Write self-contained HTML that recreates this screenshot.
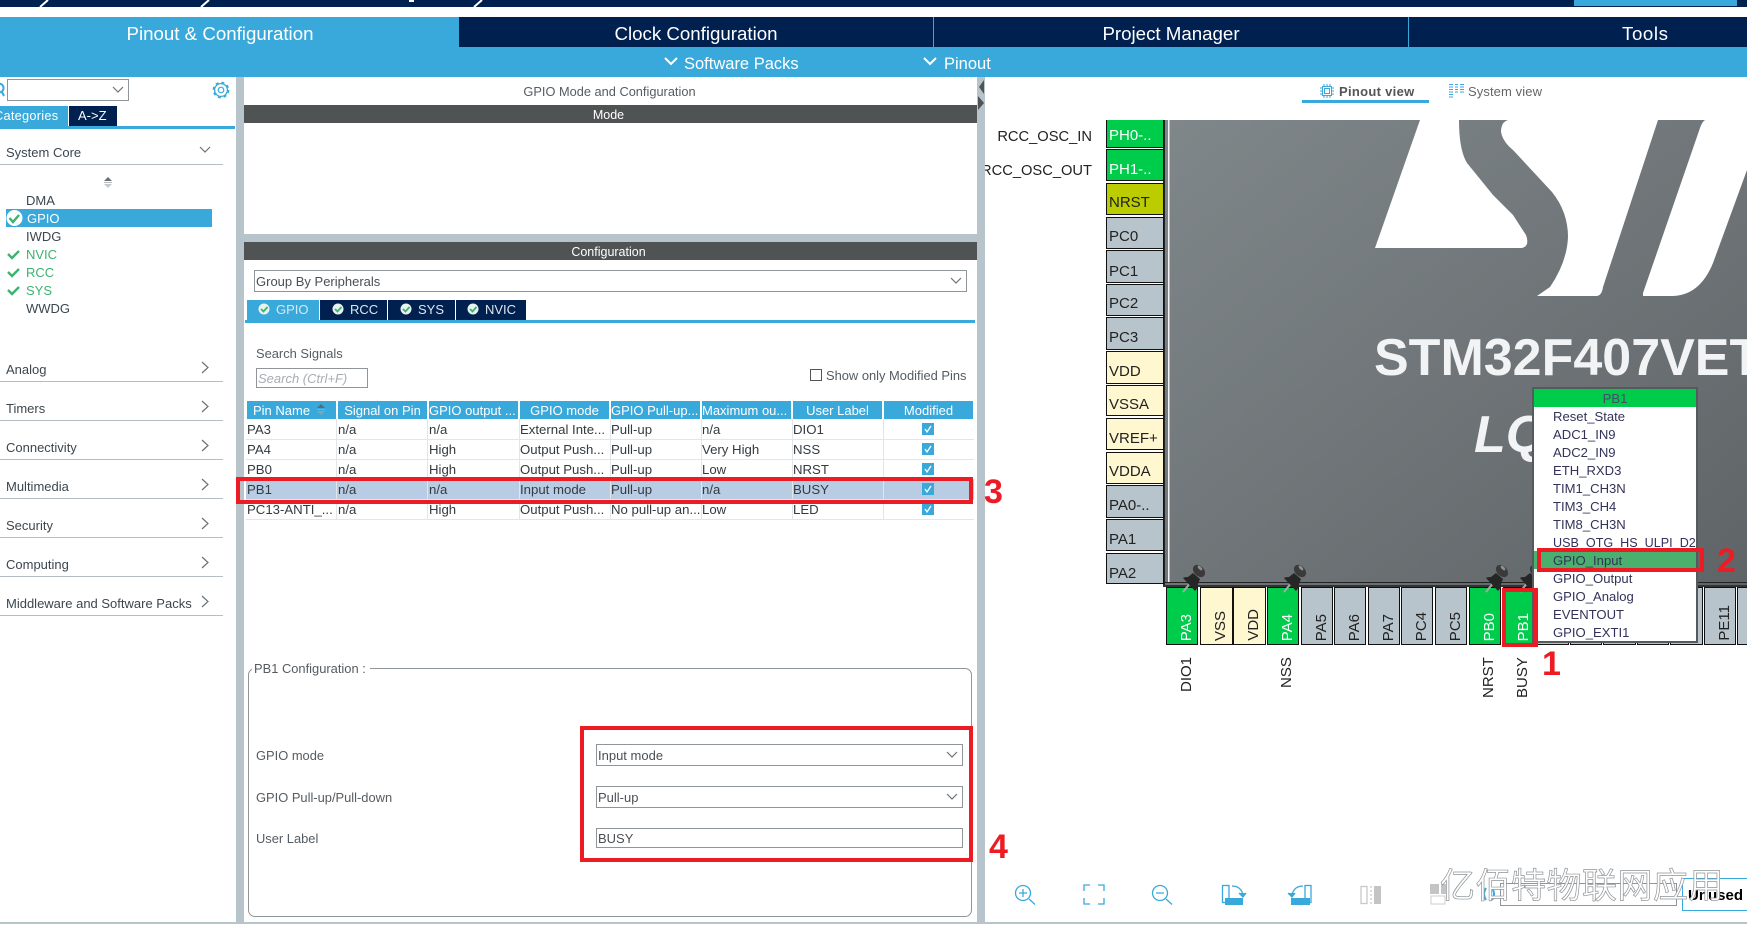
<!DOCTYPE html>
<html><head><meta charset="utf-8"><title>STM32CubeMX</title>
<style>
html,body{margin:0;padding:0;background:#fff}
#p{position:relative;width:1747px;height:929px;overflow:hidden;background:#fff;font-family:"Liberation Sans","Noto Sans CJK SC",sans-serif;font-size:13px;color:#3c464e}
#p div,#p svg{position:absolute}
.t{white-space:nowrap;line-height:18px;height:18px}
.r{background:#39A9DC}.n{background:#002050}
.tab{top:17px;height:30px;line-height:33px;text-align:center;color:#fff;font-size:18.7px;white-space:nowrap}
.hd{background:#39A9DC;top:401px;height:18px;line-height:19px;color:#fff;text-align:center;font-size:13px;white-space:nowrap;overflow:hidden}
.sl{left:0;width:223px;height:1px;background:#b3bec5}
.cell{white-space:nowrap;line-height:20px;height:18px;color:#333a40;font-size:13.2px}
.gl{background:#e2e6e8}
.sel{border:1px solid #8f9599;background:#fff;box-sizing:border-box;line-height:21px;padding-left:1px;color:#4a5056;white-space:nowrap;font-size:13px}
.lab{color:#555c62;font-size:12.9px;line-height:20px}
.redb{border:4px solid #ED1C24;box-sizing:border-box}
.num{color:#ED1C24;font-weight:bold;white-space:nowrap;line-height:30px;height:30px;font-size:34px}
.lp{left:1106px;width:58px;border:1px solid #111;box-sizing:border-box;overflow:hidden}
.lp span{position:absolute;left:2px;font-size:15px;line-height:18px;white-space:nowrap}
.bp{top:587px;height:58px;border:1px solid #111;box-sizing:border-box;overflow:hidden}
.bp span{position:absolute;left:9px;bottom:3px;width:22px;line-height:22px;font-size:15px;writing-mode:vertical-rl;transform:rotate(180deg);white-space:nowrap}
.g{background:#00CC4B;color:#fff}.c{background:#FFF7CF;color:#222}.y{background:#BBCC00;color:#222}.s{background:#B8C4CC;color:#222}
.rl{top:658px;width:20px;line-height:20px;font-size:15px;color:#222;writing-mode:vertical-rl;transform:rotate(180deg);white-space:nowrap;text-align:right;height:40px}
.mi{left:1553px;font-size:13.1px;color:#33335a;white-space:nowrap;line-height:20px;height:18px}
.s13{font-size:13px;line-height:20px}
</style></head><body>
<div id="p">
<!-- top bar -->
<div class="n" style="left:0;top:0;width:1747px;height:7px"></div>
<svg style="left:0;top:0" width="1747" height="8"><g stroke="#fff" stroke-width="2"><line x1="48" y1="0" x2="40" y2="7"/><line x1="209" y1="0" x2="201" y2="7"/><line x1="482" y1="0" x2="474" y2="7"/></g><rect x="409" y="0" width="5" height="2" fill="#fff"/></svg>
<div class="r" style="left:1574px;top:0;width:163px;height:6px"></div>

<div class="r" style="left:0;top:17px;width:1747px;height:60px"></div>
<div class="tab" style="left:0;width:440px">Pinout &amp; Configuration</div>
<div class="n tab" style="left:459px;width:474px">Clock Configuration</div>
<div class="n tab" style="left:934px;width:474px">Project Manager</div>
<div class="n tab" style="left:1409px;width:338px;text-align:left;text-indent:213px;letter-spacing:.6px">Tools</div>
<div class="t" style="left:684px;top:54px;color:#fff;font-size:16.5px;height:20px;line-height:20px">Software Packs</div>
<div class="t" style="left:944px;top:54px;color:#fff;font-size:16.5px;height:20px;line-height:20px">Pinout</div>
<svg style="left:660px;top:55px" width="290" height="14"><path d="M5 3l6 6 6-6M264 3l6 6 6-6" fill="none" stroke="#fff" stroke-width="2"/></svg>

<!-- sidebar -->
<div style="left:236px;top:77px;width:8px;height:847px;background:#B8C4CB"></div>
<svg style="left:0;top:82px" width="5" height="16"><circle cx="-1" cy="6" r="4.5" fill="none" stroke="#39A9DC" stroke-width="2"/><line x1="2" y1="10" x2="4" y2="14" stroke="#39A9DC" stroke-width="2"/></svg>
<div class="sel" style="left:7px;top:79px;width:122px;height:22px"></div>
<svg style="left:112px;top:85px" width="12" height="10"><path d="M1 2l5 5 5-5" fill="none" stroke="#6a7378" stroke-width="1.2"/></svg>
<svg style="left:212px;top:81px" width="18" height="18" viewBox="0 0 18 18"><circle cx="9" cy="9" r="6.4" fill="none" stroke="#39A9DC" stroke-width="1.3"/><circle cx="9" cy="9" r="7.6" fill="none" stroke="#39A9DC" stroke-width="1.6" stroke-dasharray="3 3"/><circle cx="9" cy="9" r="2.8" fill="none" stroke="#39A9DC" stroke-width="1.2"/></svg>
<div class="r" style="left:0;top:106px;width:68px;height:20px"></div>
<div class="n" style="left:69px;top:106px;width:48px;height:20px"></div>
<div class="t" style="left:-6px;top:107px;color:#fff;font-size:12.8px;letter-spacing:.25px">Categories</div>
<div class="t" style="left:78px;top:107px;color:#fff;font-size:13px">A-&gt;Z</div>
<div class="r" style="left:0;top:126px;width:235px;height:3px"></div>

<div class="t s13" style="left:6px;top:143px">System Core</div>
<div class="sl" style="top:164px"></div>
<svg style="left:199px;top:145px" width="12" height="10"><path d="M1 2l5 5 5-5" fill="none" stroke="#6a7378" stroke-width="1.2"/></svg>
<svg style="left:104px;top:176px" width="8" height="12"><path d="M0 5l4-4 4 4z" fill="#66707a"/><rect x="0" y="6" width="8" height="1" fill="#bbb"/><path d="M0 8l4 4 4-4z" fill="#c5cacd"/></svg>
<div class="r" style="left:6px;top:209px;width:206px;height:18px"></div>
<div class="t s13" style="left:26px;top:191px">DMA</div>
<div class="t s13" style="left:27px;top:209px;color:#fff">GPIO</div>
<div class="t s13" style="left:26px;top:227px">IWDG</div>
<div class="t s13" style="left:26px;top:245px;color:#3cb371">NVIC</div>
<div class="t s13" style="left:26px;top:263px;color:#3cb371">RCC</div>
<div class="t s13" style="left:26px;top:281px;color:#3cb371">SYS</div>
<div class="t s13" style="left:26px;top:299px">WWDG</div>
<svg style="left:6px;top:209px" width="18" height="18"><circle cx="8.5" cy="9" r="8" fill="#fff"/><path d="M3.5 9l3.5 4 6-7" fill="none" stroke="#3cb371" stroke-width="2.4"/></svg>
<svg style="left:6px;top:245px" width="16" height="60"><path d="M2 9l4 4 7-7M2 27l4 4 7-7M2 45l4 4 7-7" fill="none" stroke="#3cb371" stroke-width="2.4"/></svg>

<div class="t s13" style="left:6px;top:360px">Analog</div><div class="sl" style="top:381px"></div>
<div class="t s13" style="left:6px;top:399px">Timers</div><div class="sl" style="top:420px"></div>
<div class="t s13" style="left:6px;top:438px">Connectivity</div><div class="sl" style="top:459px"></div>
<div class="t s13" style="left:6px;top:477px">Multimedia</div><div class="sl" style="top:498px"></div>
<div class="t s13" style="left:6px;top:516px">Security</div><div class="sl" style="top:537px"></div>
<div class="t s13" style="left:6px;top:555px">Computing</div><div class="sl" style="top:576px"></div>
<div class="t s13" style="left:6px;top:594px">Middleware and Software Packs</div><div class="sl" style="top:615px"></div>
<svg style="left:200px;top:359px" width="12" height="250"><path d="M2 3l6 5.500-6 5.500M2 42l6 5.500-6 5.500M2 81l6 5.500-6 5.500M2 120l6 5.500-6 5.500M2 159l6 5.500-6 5.500M2 198l6 5.500-6 5.500M2 237l6 5.500-6 5.500" fill="none" stroke="#6a7378" stroke-width="1.2"/></svg>

<!-- middle panel -->
<div class="t" style="left:244px;top:83px;width:731px;text-align:center;color:#555c62;font-size:12.8px">GPIO Mode and Configuration</div>
<div style="left:244px;top:105px;width:729px;height:18px;background:#4F5353;color:#fff;text-align:center;line-height:20px;font-size:12.5px">Mode</div>
<div style="left:973px;top:105px;width:4px;height:18px;background:#4F5353"></div>
<div style="left:244px;top:234px;width:733px;height:8px;background:#B8C4CB"></div>
<div style="left:244px;top:242px;width:729px;height:18px;background:#4F5353;color:#fff;text-align:center;line-height:20px;font-size:12.5px">Configuration</div>
<div style="left:973px;top:242px;width:4px;height:18px;background:#4F5353"></div>
<div style="left:977px;top:77px;width:8px;height:847px;background:#B8C4CB"></div>
<svg style="left:977px;top:77px" width="8" height="36"><path d="M7 3L2 10l5 7zM1 19l6 7-6 7z" fill="#4F5353"/></svg>
<div class="sel" style="left:254px;top:270px;width:713px;height:22px">Group By Peripherals</div>
<svg style="left:950px;top:276px" width="12" height="10"><path d="M1 2l5 5 5-5" fill="none" stroke="#6a7378" stroke-width="1.2"/></svg>

<div class="r" style="left:247px;top:300px;width:72px;height:20px"></div>
<div class="n" style="left:320px;top:300px;width:67px;height:20px"></div>
<div class="n" style="left:388px;top:300px;width:67px;height:20px"></div>
<div class="n" style="left:456px;top:300px;width:70px;height:20px"></div>
<div class="r" style="left:245px;top:320px;width:730px;height:3px"></div>
<svg style="left:247px;top:300px" width="280" height="20"><g fill="#e8f2ee"><circle cx="17" cy="9" r="5.500"/><circle cx="91" cy="9" r="5.500"/><circle cx="159" cy="9" r="5.500"/><circle cx="226" cy="9" r="5.500"/></g><path d="M14 9l2.500 2.500 4-4.500M88 9l2.500 2.500 4-4.500M156 9l2.500 2.500 4-4.500M223 9l2.500 2.500 4-4.500" fill="none" stroke="#3cb371" stroke-width="1.800"/></svg>
<div class="t" style="left:276px;top:301px;color:#d5e9f3;font-size:13px">GPIO</div>
<div class="t" style="left:350px;top:301px;color:#dfe6ec;font-size:13px">RCC</div>
<div class="t" style="left:418px;top:301px;color:#dfe6ec;font-size:13px">SYS</div>
<div class="t" style="left:485px;top:301px;color:#dfe6ec;font-size:13px">NVIC</div>

<div class="t lab" style="left:256px;top:344px">Search Signals</div>
<div class="sel" style="left:256px;top:368px;width:112px;height:20px;line-height:19px;font-style:italic;color:#a8adb0">Search (Ctrl+F)</div>
<div style="left:810px;top:369px;width:12px;height:12px;border:1px solid #555;box-sizing:border-box"></div>
<div class="t lab" style="left:826px;top:366px">Show only Modified Pins</div>

<!-- table -->
<div class="hd" style="left:247px;width:89px;text-align:left;text-indent:6px">Pin Name</div>
<svg style="left:317px;top:403px" width="8" height="13"><path d="M0 5l4-4 4 4z" fill="#5a6a75"/><rect y="6" width="8" height="1" fill="#8aa"/><path d="M0 8l4 4 4-4z" fill="#7fa5bb"/></svg>
<div class="hd" style="left:338px;width:89px">Signal on Pin</div>
<div class="hd" style="left:429px;width:89px;text-align:left">GPIO output ...</div>
<div class="hd" style="left:520px;width:89px">GPIO mode</div>
<div class="hd" style="left:611px;width:89px;text-align:left">GPIO Pull-up...</div>
<div class="hd" style="left:702px;width:89px;text-align:left">Maximum ou...</div>
<div class="hd" style="left:793px;width:89px">User Label</div>
<div class="hd" style="left:884px;width:89px">Modified</div>

<div style="left:246px;top:480px;width:728px;height:19px;background:#B8CDE3"></div>
<div class="gl" style="left:246px;top:439px;width:728px;height:1px"></div>
<div class="gl" style="left:246px;top:459px;width:728px;height:1px"></div>
<div class="gl" style="left:246px;top:479px;width:728px;height:1px"></div>
<div class="gl" style="left:246px;top:499px;width:728px;height:1px"></div>
<div class="gl" style="left:246px;top:519px;width:728px;height:1px"></div>
<div class="gl" style="left:336px;top:419px;width:1px;height:100px"></div>
<div class="gl" style="left:427px;top:419px;width:1px;height:100px"></div>
<div class="gl" style="left:519px;top:419px;width:1px;height:100px"></div>
<div class="gl" style="left:610px;top:419px;width:1px;height:100px"></div>
<div class="gl" style="left:701px;top:419px;width:1px;height:100px"></div>
<div class="gl" style="left:792px;top:419px;width:1px;height:100px"></div>
<div class="gl" style="left:883px;top:419px;width:1px;height:100px"></div>

<div class="cell" style="left:247px;top:420px">PA3</div><div class="cell" style="left:338px;top:420px">n/a</div><div class="cell" style="left:429px;top:420px">n/a</div><div class="cell" style="left:520px;top:420px">External Inte...</div><div class="cell" style="left:611px;top:420px">Pull-up</div><div class="cell" style="left:702px;top:420px">n/a</div><div class="cell" style="left:793px;top:420px">DIO1</div>
<div class="cell" style="left:247px;top:440px">PA4</div><div class="cell" style="left:338px;top:440px">n/a</div><div class="cell" style="left:429px;top:440px">High</div><div class="cell" style="left:520px;top:440px">Output Push...</div><div class="cell" style="left:611px;top:440px">Pull-up</div><div class="cell" style="left:702px;top:440px">Very High</div><div class="cell" style="left:793px;top:440px">NSS</div>
<div class="cell" style="left:247px;top:460px">PB0</div><div class="cell" style="left:338px;top:460px">n/a</div><div class="cell" style="left:429px;top:460px">High</div><div class="cell" style="left:520px;top:460px">Output Push...</div><div class="cell" style="left:611px;top:460px">Pull-up</div><div class="cell" style="left:702px;top:460px">Low</div><div class="cell" style="left:793px;top:460px">NRST</div>
<div class="cell" style="left:247px;top:480px">PB1</div><div class="cell" style="left:338px;top:480px">n/a</div><div class="cell" style="left:429px;top:480px">n/a</div><div class="cell" style="left:520px;top:480px">Input mode</div><div class="cell" style="left:611px;top:480px">Pull-up</div><div class="cell" style="left:702px;top:480px">n/a</div><div class="cell" style="left:793px;top:480px">BUSY</div>
<div class="cell" style="left:247px;top:500px">PC13-ANTI_...</div><div class="cell" style="left:338px;top:500px">n/a</div><div class="cell" style="left:429px;top:500px">High</div><div class="cell" style="left:520px;top:500px">Output Push...</div><div class="cell" style="left:611px;top:500px">No pull-up an...</div><div class="cell" style="left:702px;top:500px">Low</div><div class="cell" style="left:793px;top:500px">LED</div>
<svg style="left:922px;top:423px" width="12" height="96"><g fill="#39A9DC"><rect width="12" height="12"/><rect y="20" width="12" height="12"/><rect y="40" width="12" height="12"/><rect y="60" width="12" height="12"/><rect y="80" width="12" height="12"/></g><path d="M3 6l2 3 4-6M3 26l2 3 4-6M3 46l2 3 4-6M3 66l2 3 4-6M3 86l2 3 4-6" fill="none" stroke="#fff" stroke-width="1.300"/></svg>

<div class="redb" style="left:236px;top:477px;width:737px;height:27px"></div>
<div class="num" style="left:984px;top:477px">3</div>

<!-- PB1 config -->
<div style="left:248px;top:668px;width:722px;height:247px;border:1px solid #8f9599;border-radius:7px;box-sizing:content-box"></div>
<div class="t lab" style="left:252px;top:659px;background:#fff;padding:0 4px 0 2px;height:20px">PB1 Configuration :</div>
<div class="t lab" style="left:256px;top:746px">GPIO mode</div>
<div class="t lab" style="left:256px;top:788px">GPIO Pull-up/Pull-down</div>
<div class="t lab" style="left:256px;top:829px">User Label</div>
<div class="sel" style="left:596px;top:744px;width:367px;height:22px">Input mode</div>
<div class="sel" style="left:596px;top:786px;width:367px;height:22px">Pull-up</div>
<div class="sel" style="left:596px;top:828px;width:367px;height:20px;line-height:19px">BUSY</div>
<svg style="left:946px;top:750px" width="12" height="52"><path d="M1 2l5 5 5-5M1 44l5 5 5-5" fill="none" stroke="#6a7378" stroke-width="1.200"/></svg>
<div class="redb" style="left:580px;top:726px;width:393px;height:136px"></div>
<div class="num" style="left:989px;top:832px">4</div>

<!-- right panel -->
<svg style="left:1320px;top:84px" width="14" height="14" viewBox="0 0 14 14"><rect x="2.500" y="2.500" width="9" height="9" fill="none" stroke="#39A9DC"/><rect x="4.500" y="4.500" width="5" height="5" fill="none" stroke="#39A9DC"/><path d="M4 0v2M7 0v2M10 0v2M4 12v2M7 12v2M10 12v2M0 4h2M0 7h2M0 10h2M12 4h2M12 7h2M12 10h2" stroke="#39A9DC"/></svg>
<div class="t" style="left:1339px;top:83px;font-weight:bold;color:#555;font-size:13px;letter-spacing:.3px">Pinout view</div>
<div class="r" style="left:1302px;top:100px;width:127px;height:3px"></div>
<svg style="left:1449px;top:84px" width="15" height="14"><path d="M0 .5h4M6 .5h3M11 .5h4M0 3h4M6 3h3M11 3h4M0 5.500h4M6 5.500h3M11 5.500h4M0 8h4M11 8h4M6 8h3M0 10.500h4M0 13h4" stroke="#39A9DC"/></svg>
<div class="t" style="left:1468px;top:83px;color:#666;font-size:13px;letter-spacing:.1px">System view</div>

<div class="t" style="right:655px;top:128px;font-size:14.7px;color:#222">RCC_OSC_IN</div>
<div class="t" style="right:655px;top:161px;font-size:14.7px;color:#222;width:107px;overflow:hidden;direction:rtl;line-height:20px">RCC_OSC_OUT</div>

<!-- chip -->
<svg style="left:1163px;top:120px" width="584" height="467" viewBox="1163 120 584 467">
<defs><linearGradient id="cg" x1="0" y1="0" x2="1" y2="1"><stop offset="0" stop-color="#80878a"/><stop offset="1" stop-color="#5f6467"/></linearGradient></defs>
<rect x="1163" y="120" width="584" height="466" fill="url(#cg)"/>
<rect x="1163" y="120" width="2" height="466" fill="#222"/>
<rect x="1168" y="120" width="1.500" height="462" fill="#f5f5f5"/>
<rect x="1163" y="582" width="584" height="1" fill="#222"/>
<rect x="1163" y="585" width="584" height="2" fill="#333"/>
<path fill="#fff" d="M1420 120L1375 248H1522Q1530 246 1526 235L1513 215L1493 195L1467 163Q1459 150 1459 120Z"/>
<path fill="#fff" d="M1508 120Q1501 122 1501 132Q1503 142 1513 150L1552 192Q1568 212 1568 237Q1567 262 1550 287L1537 296H1597Q1602 295 1603 287L1658 120Z"/>
<path fill="#fff" d="M1705 120Q1702 122 1700 128L1643 293V296H1673Q1700 295 1713 263L1747 170V120Z"/>
</svg>
<div class="t" style="left:1374px;top:332px;height:52px;line-height:52px;font-size:52px;font-weight:bold;color:#f2f3f5">STM32F407VETx</div>
<div class="t" style="left:1474px;top:409px;height:52px;line-height:52px;font-size:52px;font-weight:bold;font-style:italic;color:#f2f3f5">LQF</div>

<!-- left pins -->
<div class="lp g" style="top:120px;height:28px;border-top:0"><span style="top:7px">PH0-..</span></div>
<div class="lp g" style="top:149px;height:32px"><span style="top:11px">PH1-..</span></div>
<div class="lp y" style="top:183px;height:32px"><span style="top:10px">NRST</span></div>
<div class="lp s" style="top:217px;height:32px"><span style="top:10px">PC0</span></div>
<div class="lp s" style="top:250px;height:33px"><span style="top:12px">PC1</span></div>
<div class="lp s" style="top:284px;height:32px"><span style="top:10px">PC2</span></div>
<div class="lp s" style="top:317px;height:33px"><span style="top:11px">PC3</span></div>
<div class="lp c" style="top:351px;height:33px"><span style="top:11px">VDD</span></div>
<div class="lp c" style="top:385px;height:31px"><span style="top:10px">VSSA</span></div>
<div class="lp c" style="top:418px;height:32px"><span style="top:11px">VREF+</span></div>
<div class="lp c" style="top:452px;height:32px"><span style="top:10px">VDDA</span></div>
<div class="lp s" style="top:485px;height:33px"><span style="top:11px">PA0-..</span></div>
<div class="lp s" style="top:519px;height:32px"><span style="top:11px">PA1</span></div>
<div class="lp s" style="top:553px;height:31px"><span style="top:11px">PA2</span></div>

<!-- bottom pins -->
<div class="bp g" style="left:1166px;width:32px"><span>PA3</span></div>
<div class="bp c" style="left:1200px;width:33px"><span>VSS</span></div>
<div class="bp c" style="left:1233px;width:33px"><span>VDD</span></div>
<div class="bp g" style="left:1267px;width:32px"><span>PA4</span></div>
<div class="bp s" style="left:1301px;width:32px"><span>PA5</span></div>
<div class="bp s" style="left:1334px;width:32px"><span>PA6</span></div>
<div class="bp s" style="left:1368px;width:32px"><span>PA7</span></div>
<div class="bp s" style="left:1401px;width:32px"><span>PC4</span></div>
<div class="bp s" style="left:1435px;width:32px"><span>PC5</span></div>
<div class="bp g" style="left:1469px;width:32px"><span>PB0</span></div>
<div class="bp g" style="left:1503px;width:32px"><span>PB1</span></div>
<div class="bp s" style="left:1536px;width:33px"></div>
<div class="bp s" style="left:1570px;width:32px"></div>
<div class="bp s" style="left:1603px;width:33px"></div>
<div class="bp s" style="left:1637px;width:32px"></div>
<div class="bp s" style="left:1670px;width:33px"></div>
<div class="bp s" style="left:1704px;width:32px"><span>PE11</span></div>
<div class="bp s" style="left:1737px;width:32px"></div>

<div class="rl" style="left:1177px;top:660px;height:32px">DIO1</div>
<div class="rl" style="left:1277px;height:30px">NSS</div>
<div class="rl" style="left:1479px;height:40px">NRST</div>
<div class="rl" style="left:1513px;height:40px">BUSY</div>

<!-- pushpins -->
<svg style="left:0;top:0;pointer-events:none" width="1747" height="929">
<defs><g id="pp"><line x1="0" y1="0" x2="8" y2="-10" stroke="#a5a9a9" stroke-width="2"/><path d="M0-14L12-1Q15-4 15-8L17-13L10-19L5-15Q1-15 0-14z" fill="#262626"/><ellipse cx="16" cy="-21" rx="7" ry="5" fill="#3a3a3a" transform="rotate(45 16 -21)"/><ellipse cx="17" cy="-24" rx="3" ry="1.500" fill="#8f8f8f" transform="rotate(45 17 -24)"/></g></defs>
<use href="#pp" x="1183" y="592"/><use href="#pp" x="1284" y="592"/><use href="#pp" x="1486" y="592"/><use href="#pp" x="1520" y="592"/>
</svg>

<!-- popup -->
<div style="left:1532px;top:387px;width:166px;height:256px;background:#fff;border:2px solid #555a5e;box-sizing:border-box"></div>
<div style="left:1534px;top:389px;width:162px;height:18px;background:#00CC4B;text-align:center;line-height:20px;color:#4a4a6a;font-size:13.1px">PB1</div>
<div style="left:1534px;top:551px;width:162px;height:18px;background:#4AB06E"></div>
<div class="mi" style="top:407px">Reset_State</div>
<div class="mi" style="top:425px">ADC1_IN9</div>
<div class="mi" style="top:443px">ADC2_IN9</div>
<div class="mi" style="top:461px">ETH_RXD3</div>
<div class="mi" style="top:479px">TIM1_CH3N</div>
<div class="mi" style="top:497px">TIM3_CH4</div>
<div class="mi" style="top:515px">TIM8_CH3N</div>
<div class="mi" style="top:533px;font-size:12.6px">USB_OTG_HS_ULPI_D2</div>
<div class="mi" style="top:551px">GPIO_Input</div>
<div class="mi" style="top:569px">GPIO_Output</div>
<div class="mi" style="top:587px">GPIO_Analog</div>
<div class="mi" style="top:605px">EVENTOUT</div>
<div class="mi" style="top:623px">GPIO_EXTI1</div>
<div class="redb" style="left:1537px;top:548px;width:167px;height:24px"></div>
<div class="redb" style="left:1502px;top:588px;width:36px;height:59px"></div>
<div class="num" style="left:1717px;top:546px">2</div>
<div class="num" style="left:1542px;top:649px">1</div>

<!-- toolbar -->
<svg style="left:1005px;top:870px" width="400" height="50" viewBox="1005 870 400 50" fill="none" stroke="#39A9DC" stroke-width="1.300">
<circle cx="1023" cy="893" r="7.500"/><path d="M1019 893h8M1023 889v8M1029 899l6 5.500"/>
<path d="M1084 891v-6h6M1098 885h6v6M1104 898v6h-6M1090 904h-6v-6"/>
<circle cx="1160" cy="893" r="7.500"/><path d="M1156 893h8M1166 899l6 5.500"/>
<rect x="1222.500" y="885.500" width="6.500" height="17"/><rect x="1225" y="898" width="18" height="7" fill="#39A9DC" stroke="none"/><path d="M1232 886q9 0 11 9"/><path d="M1239 893l4 4 3-4" fill="#39A9DC"/>
<rect x="1305" y="885.500" width="6" height="17"/><rect x="1291" y="898" width="19" height="7" fill="#39A9DC" stroke="none"/><path d="M1303 886q-9 0-11 9"/><path d="M1288 893l4 4 3-4" fill="#39A9DC"/>
<rect x="1361" y="886.500" width="6" height="17" stroke="#c8c8c8"/><path d="M1371 886v18" stroke="#c8c8c8" stroke-dasharray="2 2"/><rect x="1374" y="886" width="7" height="18" fill="#c4c4c4" stroke="none"/>
</svg>
<svg style="left:1430px;top:884px" width="18" height="22"><rect x="0" y="0" width="9" height="10" fill="#c4c4c4"/><rect x="11" y="0" width="5" height="10" fill="#c4c4c4"/><rect x="1" y="12" width="14" height="8" fill="none" stroke="#ccc"/></svg>
<svg style="left:1480px;top:884px" width="18" height="22"><path d="M6 4q-4 6 0 12M12 4q4 6 0 12" fill="none" stroke="#39A9DC" stroke-width="2"/></svg>
<div style="left:1500px;top:883px;width:177px;height:23px;border:1px solid #8f9599;box-sizing:border-box"></div>
<div style="left:1682px;top:878px;width:70px;height:33px;border:1px solid #39A9DC;box-sizing:border-box;background:#fff"></div>
<div class="t" style="left:1688px;top:887px;font-weight:bold;color:#000;font-size:15px">Unused</div>
<div class="t" style="left:1440px;top:868px;height:38px;line-height:38px;font-size:35px;color:#fff;-webkit-text-stroke:.7px #8f9599;letter-spacing:.5px">亿佰特物联网应用</div>

<div style="left:0;top:922px;width:1747px;height:2px;background:#B8C4CB"></div>
</div>
</body></html>
